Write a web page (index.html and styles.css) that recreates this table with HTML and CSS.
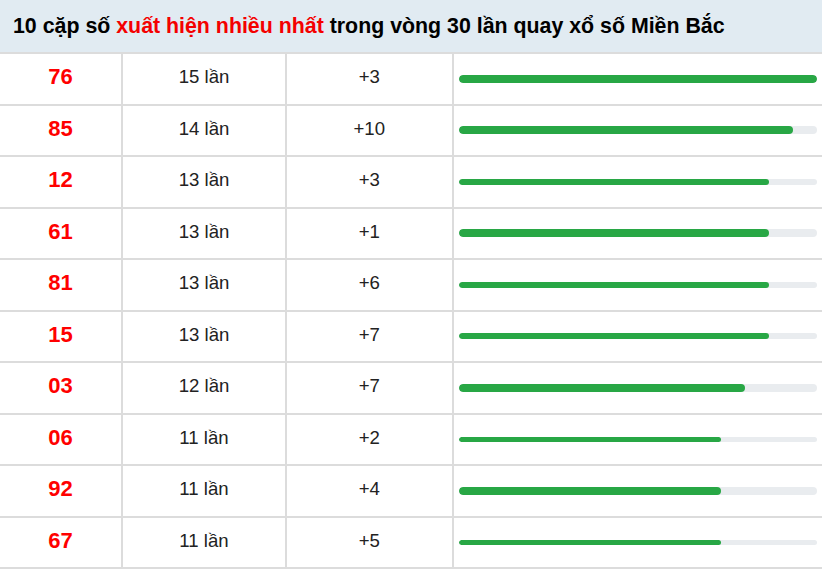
FILE: index.html
```html
<!DOCTYPE html>
<html lang="vi">
<head>
<meta charset="utf-8">
<title>10 cặp số xuất hiện nhiều nhất</title>
<link rel="stylesheet" href="styles.css">
</head>
<body>
<div class="board">
  <div class="title">10 cặp số <span class="hl">xuất hiện nhiều nhất</span> trong vòng 30 lần quay xổ số Miền Bắc</div>
  <div class="row"><div class="cell num">76</div><div class="cell">15 lần</div><div class="cell">+3</div><div class="cell bar-cell"><div class="track h8"><div class="fill" style="width:100%"></div></div></div></div>
  <div class="row"><div class="cell num">85</div><div class="cell">14 lần</div><div class="cell">+10</div><div class="cell bar-cell"><div class="track h8"><div class="fill" style="width:93.33%"></div></div></div></div>
  <div class="row"><div class="cell num">12</div><div class="cell">13 lần</div><div class="cell">+3</div><div class="cell bar-cell"><div class="track h5"><div class="fill" style="width:86.67%"></div></div></div></div>
  <div class="row"><div class="cell num">61</div><div class="cell">13 lần</div><div class="cell">+1</div><div class="cell bar-cell"><div class="track h8"><div class="fill" style="width:86.67%"></div></div></div></div>
  <div class="row"><div class="cell num">81</div><div class="cell">13 lần</div><div class="cell">+6</div><div class="cell bar-cell"><div class="track h5"><div class="fill" style="width:86.67%"></div></div></div></div>
  <div class="row"><div class="cell num">15</div><div class="cell">13 lần</div><div class="cell">+7</div><div class="cell bar-cell"><div class="track h6"><div class="fill" style="width:86.67%"></div></div></div></div>
  <div class="row"><div class="cell num">03</div><div class="cell">12 lần</div><div class="cell">+7</div><div class="cell bar-cell"><div class="track h8"><div class="fill" style="width:80%"></div></div></div></div>
  <div class="row"><div class="cell num">06</div><div class="cell">11 lần</div><div class="cell">+2</div><div class="cell bar-cell"><div class="track h5"><div class="fill" style="width:73.33%"></div></div></div></div>
  <div class="row"><div class="cell num">92</div><div class="cell">11 lần</div><div class="cell">+4</div><div class="cell bar-cell"><div class="track h8"><div class="fill" style="width:73.33%"></div></div></div></div>
  <div class="row"><div class="cell num">67</div><div class="cell">11 lần</div><div class="cell">+5</div><div class="cell bar-cell"><div class="track h5"><div class="fill" style="width:73.33%"></div></div></div></div>
</div>
</body>
</html>
```
FILE: styles.css
```css
html, body {
  margin: 0;
  padding: 0;
  background: #fff;
}
body {
  font-family: "Liberation Sans", Arial, sans-serif;
  color: #222;
}
.board {
  width: 822px;
  display: grid;
  row-gap: 2px;
  background: #dcdcdc;
  padding-bottom: 2px;
}
.title {
  height: 52px;
  box-sizing: border-box;
  background: #e1ebf2;
  padding-left: 13px;
  display: flex;
  align-items: center;
  white-space: pre;
  font-size: 21.35px;
  font-weight: bold;
  color: #000;
}
.hl {
  color: #f40000;
}
.row {
  display: grid;
  grid-template-columns: 121px 162px 164.5px 1fr;
  column-gap: 2px;
  height: 49.5px;
}
.cell {
  background: #fff;
  display: flex;
  align-items: center;
  justify-content: center;
  padding-bottom: 3px;
  box-sizing: border-box;
  font-size: 18.6px;
  color: #222;
}
.num {
  font-size: 22px;
  font-weight: bold;
  color: #f00;
}
.bar-cell {
  padding: 0 5px;
  justify-content: stretch;
}
.track {
  flex: 1;
  background: #e9ecef;
  border-radius: 4px;
  overflow: hidden;
  display: flex;
}
.h8 { height: 8px; }
.h6 { height: 6px; }
.h5 { height: 5.5px; }
.fill {
  background: #28a745;
  height: 100%;
  border-radius: 4px;
}
```
